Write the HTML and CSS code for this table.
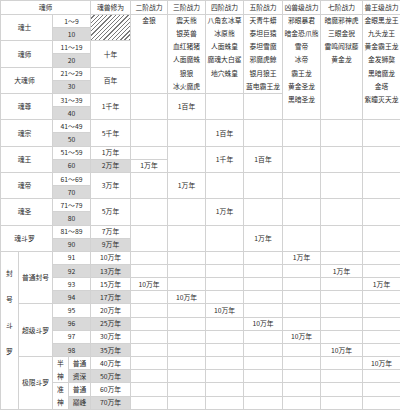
FILE: index.html
```html
<!DOCTYPE html>
<html lang="zh">
<head>
<meta charset="utf-8">
<link rel="stylesheet" href="styles.css">
</head>
<body>
<div class="sheet">
  <div class="s4">魂师</div><div>魂兽修为</div><div>二阶战力</div><div>三阶战力</div><div>四阶战力</div><div>五阶战力</div><div>凶兽级战力</div><div>七阶战力</div><div>兽王级战力</div>

  <div class="s2 r2 nm">魂士</div><div class="s2">1～9</div><div class="r2 hatch"></div>
  <div class="r6 list"><span>金狼</span></div>
  <div class="r6 list"><span>震天熊</span><span>银英兽</span><span>血红猪猪</span><span>人面魔蛛</span><span>狼狼</span><span>冰火魔虎</span></div>
  <div class="r6 list"><span>八角玄冰草</span><span>冰原熊</span><span>人面蛛皇</span><span>魔魂大白鲨</span><span>地穴蛛皇</span></div>
  <div class="r6 list"><span>天青牛蟒</span><span>泰坦巨猿</span><span>泰坦雪魔</span><span>邪魔虎鲸</span><span>银月狼王</span><span>蓝电霸王龙</span></div>
  <div class="r8 list"><span>邪眼暴君</span><span>暗金恐爪熊</span><span>雪帝</span><span>冰帝</span><span>霸王龙</span><span>黄金圣龙</span><span>黑暗圣龙</span></div>
  <div class="r8 list"><span>暗魔邪神虎</span><span>三眼金猊</span><span>雷鸣阎狱藤</span><span>黄金龙</span></div>
  <div class="r8 list"><span>金眼黑龙王</span><span>九头龙王</span><span>黄金霸王龙</span><span>金发狮獒</span><span>黑暗魔龙</span><span>金塔</span><span>紫瞳灭天龙</span></div>
  <div class="s2 g">10</div>

  <div class="s2 r2 nm">魂师</div><div class="s2">11～19</div><div class="r2">十年</div>
  <div class="s2 g">20</div>

  <div class="s2 r2 nm">大魂师</div><div class="s2">21～29</div><div class="r2">百年</div>
  <div class="s2 g">30</div>

  <div class="s2 r2 nm">魂尊</div><div class="s2">31～39</div><div class="r2">1千年</div>
  <div class="r2"></div><div class="r2">1百年</div><div class="r2"></div><div class="r2"></div>
  <div class="s2 g">40</div>

  <div class="s2 r2 nm">魂宗</div><div class="s2">41～49</div><div class="r2">5千年</div>
  <div class="r2"></div><div class="r2"></div><div class="r2">1百年</div><div class="r2"></div><div class="r2"></div><div class="r2"></div><div class="r2"></div>
  <div class="s2 g">50</div>

  <div class="s2 r2 nm">魂王</div><div class="s2">51～59</div><div>1万年</div>
  <div></div><div class="r2"></div><div class="r2">1千年</div><div class="r2">1百年</div><div class="r2"></div><div class="r2"></div><div class="r2"></div>
  <div class="s2 g">60</div><div class="g">2万年</div><div>1万年</div>

  <div class="s2 r2 nm">魂帝</div><div class="s2">61～69</div><div class="r2">3万年</div>
  <div class="r2"></div><div class="r2">1万年</div><div class="r2"></div><div class="r2"></div><div class="r2"></div><div class="r2"></div><div class="r2"></div>
  <div class="s2 g">70</div>

  <div class="s2 r2 nm">魂圣</div><div class="s2">71～79</div><div class="r2">5万年</div>
  <div class="r2"></div><div class="r2"></div><div class="r2">1万年</div><div class="r2"></div><div class="r2"></div><div class="r2"></div><div class="r2"></div>
  <div class="s2 g">80</div>

  <div class="s2 r2 nm">魂斗罗</div><div class="s2">81～89</div><div>7万年</div>
  <div class="r2"></div><div class="r2"></div><div class="r2"></div><div class="r2">1万年</div><div class="r2"></div><div class="r2"></div><div class="r2"></div>
  <div class="s2 g">90</div><div class="g">9万年</div>

  <div class="r12 vert"><span>封</span><span>号</span><span>斗</span><span>罗</span></div>
  <div class="r4">普通封号</div><div class="s2">91</div><div>10万年</div>
  <div></div><div></div><div></div><div></div><div>1万年</div><div></div><div></div>

  <div class="s2 g">92</div><div class="g">13万年</div>
  <div></div><div></div><div></div><div></div><div></div><div>1万年</div><div></div>

  <div class="s2">93</div><div>15万年</div>
  <div>10万年</div><div></div><div></div><div></div><div></div><div></div><div>1万年</div>

  <div class="s2 g">94</div><div class="g">17万年</div>
  <div></div><div>10万年</div><div></div><div></div><div></div><div></div><div></div>

  <div class="r4">超级斗罗</div><div class="s2">95</div><div>20万年</div>
  <div></div><div></div><div>10万年</div><div></div><div></div><div></div><div></div>

  <div class="s2 g">96</div><div class="g">25万年</div>
  <div></div><div></div><div></div><div>10万年</div><div></div><div></div><div></div>

  <div class="s2">97</div><div>30万年</div>
  <div></div><div></div><div></div><div></div><div>10万年</div><div></div><div></div>

  <div class="s2 g">98</div><div class="g">35万年</div>
  <div></div><div></div><div></div><div></div><div></div><div>10万年</div><div></div>

  <div class="r4">极限斗罗</div><div class="r2 pair"><span>半</span><span>神</span></div><div>普通</div><div>40万年</div>
  <div></div><div></div><div></div><div></div><div></div><div></div><div>10万年</div>

  <div class="g">资深</div><div class="g">50万年</div>
  <div></div><div></div><div></div><div></div><div></div><div></div><div></div>

  <div class="r2 pair"><span>准</span><span>神</span></div><div>普通</div><div>60万年</div>
  <div></div><div></div><div></div><div></div><div></div><div></div><div></div>

  <div class="g">巅峰</div><div class="g">70万年</div>
  <div></div><div></div><div></div><div></div><div></div><div></div><div></div>
</div>
</body>
</html>
```

FILE: styles.css
```css
html, body {
  margin: 0;
  padding: 0;
  background: #fff;
}
body {
  font-family: "Noto Sans CJK SC", "Noto Sans", sans-serif;
  font-size: 6.8px;
  color: #2a2a2a;
  overflow: hidden;
}
.sheet {
  display: grid;
  grid-template-columns: 17px 33px 15px 21px 39px 36px 37px 37px 38px 37px 41px 37px;
  grid-template-rows: 13px repeat(30, 12.17px);
  gap: 1px;
  padding: 1px;
  background: #d2d2d2;
  width: max-content;
}
.sheet > div {
  background: #fff;
  display: flex;
  align-items: center;
  justify-content: center;
  text-align: center;
  line-height: 1;
  white-space: nowrap;
  overflow: hidden;
}
.sheet > .nm {
  padding-right: 4px;
}
.sheet > .g {
  background: #d9d9d9;
}
.sheet > .hatch {
  background: repeating-linear-gradient(135deg, #fff 0 2px, #7a7a7a 2px 3px);
}
.s2 { grid-column: span 2; }
.s4 { grid-column: span 4; }
.r2 { grid-row: span 2; }
.r4 { grid-row: span 4; }
.r6 { grid-row: span 6; }
.r8 { grid-row: span 8; }
.r12 { grid-row: span 12; }

.sheet > .list {
  flex-direction: column;
  justify-content: flex-start;
}
.list span {
  display: block;
  height: 13.17px;
  line-height: 13.17px;
}
.list span:first-child {
  margin-top: -1px;
}
.sheet > .vert {
  flex-direction: column;
  justify-content: flex-start;
  padding-top: 8px;
}
.vert span {
  display: block;
  height: 26px;
  line-height: 26px;
}
.sheet > .pair {
  flex-direction: column;
}
.pair span {
  display: block;
  height: 13.17px;
  line-height: 13.17px;
}
```
